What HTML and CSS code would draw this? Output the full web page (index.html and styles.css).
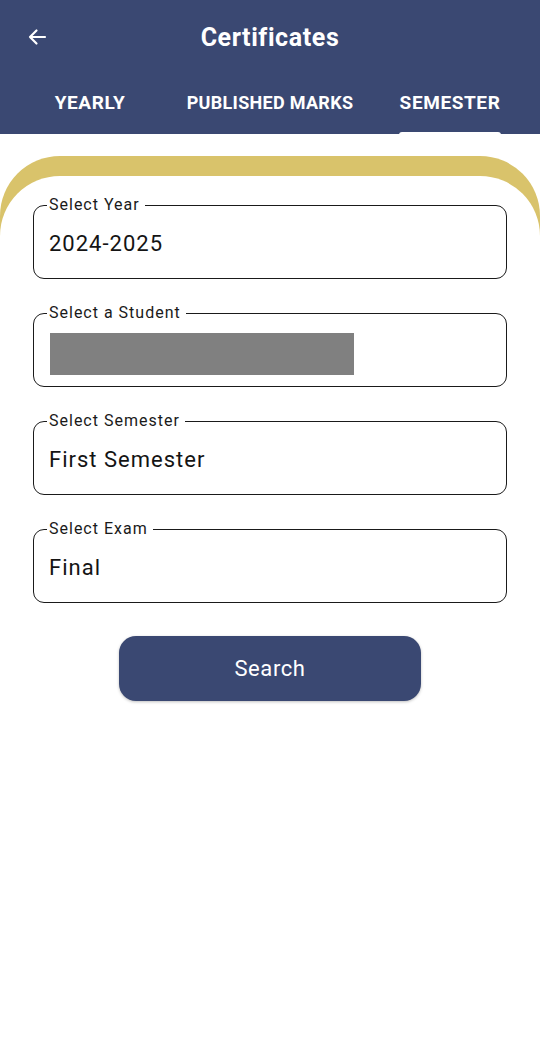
FILE: index.html
```html
<!DOCTYPE html>
<html>
<head>
<meta charset="utf-8">
<link rel="stylesheet" href="styles.css">
</head>
<body>
<header class="appbar">
  <div class="toolbar">
    <svg class="back" width="24" height="24" viewBox="0 0 24 24"><path d="M20 12H5M11.5 5.5L5 12l6.5 6.5" fill="none" stroke="#fff" stroke-width="2.2" stroke-linecap="round" stroke-linejoin="round"/></svg>
    <h1 class="title">Certificates</h1>
  </div>
  <nav class="tabs">
    <div class="tab">YEARLY</div>
    <div class="tab">PUBLISHED MARKS</div>
    <div class="tab active">SEMESTER<span class="indicator"></span></div>
  </nav>
</header>
<main class="sheet">
  <div class="card">
    <fieldset class="field"><legend>Select Year</legend><div class="value">2024-2025</div></fieldset>
    <fieldset class="field"><legend>Select a Student</legend><div class="redact"></div></fieldset>
    <fieldset class="field"><legend>Select Semester</legend><div class="value">First Semester</div></fieldset>
    <fieldset class="field"><legend>Select Exam</legend><div class="value">Final</div></fieldset>
    <div class="actions"><button class="search">Search</button></div>
  </div>
</main>
</body>
</html>
```
FILE: styles.css
```css
* { box-sizing: border-box; }
html, body { margin: 0; padding: 0; background: #fff; }
body { width: 540px; height: 1062px; overflow: hidden; font-family: Roboto, "Liberation Sans", sans-serif; color: #111; }

.appbar { background: #3a4872; height: 134px; color: #fff; }
.toolbar { height: 74px; display: flex; align-items: center; justify-content: center; position: relative; }
.back { position: absolute; left: 25px; top: 25px; }
.title { margin: 0; font-size: 25px; font-weight: 700; letter-spacing: 0.6px; }
.tabs { display: grid; grid-template-columns: 1fr 1fr 1fr; height: 60px; }
.tab { display: flex; justify-content: center; align-items: flex-start; padding-top: 17px; font-size: 19px; font-weight: 700; letter-spacing: 0.6px; position: relative; }
.tab:nth-child(2) { font-size: 18px; letter-spacing: 0.3px; padding-top: 18px; }
.indicator { position: absolute; bottom: -2px; left: 39px; right: 39px; height: 4px; background: #fff; border-radius: 3px 3px 0 0; }

.sheet { margin-top: 22px; background: #d9c36b; border-radius: 60px 60px 0 0; padding-top: 20px; height: 906px; }
.card { background: #fff; border-radius: 60px 60px 0 0; height: 100%; padding: 20px 33px 0; display: flex; flex-direction: column; gap: 25px; }
.field { margin: 0; border: 1.3px solid #1a1a1a; border-radius: 11px; height: 83px; padding: 0 14px; min-width: 0; }
.field legend { font-size: 16px; padding: 0 5px 0 2px; margin-left: -1px; color: #1a1a1a; letter-spacing: 1px; line-height: 18px; }
.value { font-size: 22px; letter-spacing: 1px; padding-top: 17px; padding-left: 1px; line-height: 26px; color: #141414; }
.redact { width: 304px; height: 42px; background: #808080; margin-top: 11px; margin-left: 2px; }

.actions { display: flex; justify-content: center; margin-top: 8px; }
.search { width: 302px; height: 65px; border: 0; border-radius: 17px; background: #3a4872; color: #fff; font-family: Roboto, "Liberation Sans", sans-serif; font-size: 22px; letter-spacing: 0.6px; box-shadow: 0 1px 3px rgba(0,0,0,0.25); }
```
